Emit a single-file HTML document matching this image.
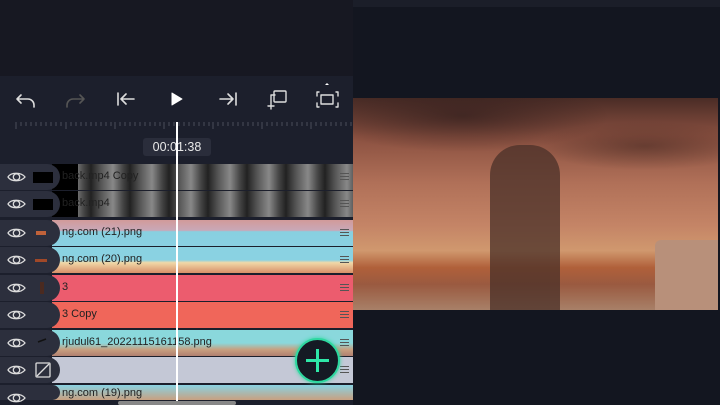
<!DOCTYPE html><html><head><style>
*{margin:0;padding:0;box-sizing:border-box}
body{width:720px;height:405px;overflow:hidden;background:#171822;font-family:"Liberation Sans",sans-serif;position:relative}
.a{position:absolute}
.row{position:absolute;left:0;width:353px;height:26px}
.trk{position:absolute;left:52px;right:0;top:0;bottom:0;overflow:hidden}
.trk span{position:absolute;left:10px;top:6px;font-size:11px;color:#222}
.pill{position:absolute;left:0;top:0;width:60px;height:26px;background:#2c2f3d;border-radius:0 13px 13px 0}
.hb{position:absolute;right:4px;top:9px;width:9px;height:7px;border-top:1px solid #555;border-bottom:1px solid #555}
.hb:after{content:"";position:absolute;left:0;right:0;top:2px;border-top:1px solid #555}
</style></head><body>
<div class="a" style="left:353px;top:0;width:367px;height:405px;background:#131620"></div>
<div class="a" style="left:353px;top:0;width:367px;height:7px;background:#1b1e29"></div>
<div class="a" style="left:353px;top:98px;width:365px;height:212px;background:linear-gradient(180deg,#4a2c26 0%,#8a5040 18%,#b07058 40%,#c48466 60%,#d0986e 72%,#b0603a 80%,#9a5a40 88%,#a88068 100%)"></div>
<div class="a" style="left:353px;top:98px;width:365px;height:120px;background:radial-gradient(ellipse 40% 30% at 30% 15%,rgba(40,25,25,.6),transparent),radial-gradient(ellipse 30% 20% at 80% 40%,rgba(60,35,30,.5),transparent)"></div>
<div class="a" style="left:490px;top:145px;width:70px;height:165px;background:#4a3028;border-radius:30px 30px 0 0;opacity:.75"></div>
<div class="a" style="left:655px;top:240px;width:63px;height:70px;background:#b8907a;border-radius:6px 0 0 0"></div>
<div class="a" style="left:0;top:76px;width:353px;height:329px;background:#1c1f2c"></div>
<svg class="a" style="left:0;top:76px" width="353" height="40" viewBox="0 0 353 40" fill="none" stroke-linecap="round" stroke-linejoin="round">
<path d="M17 23h11a6 6 0 0 1 6 6v2M17 23l4-4M17 23l4 4" stroke="#ddd" stroke-width="1.6"/>
<path d="M84 23H73a6 6 0 0 0-6 6v2M84 23l-4-4M84 23l-4 4" stroke="#555" stroke-width="1.6"/>
<path d="M118 17v12M121 23h13M121 23l5-5M121 23l5 5" stroke="#ddd" stroke-width="1.6"/>
<path d="M172 17v12l10-6z" fill="#fff" stroke="#fff" stroke-width="1"/>
<path d="M236 17v12M233 23h-13M233 23l-5-5M233 23l-5 5" stroke="#ddd" stroke-width="1.6"/>
<rect x="274" y="15" width="12" height="11" rx="1" stroke="#ddd" stroke-width="1.4"/><path d="M271 28v-9h4M268 30h6M271 27v6" stroke="#ddd" stroke-width="1.4"/>
<path d="M319 16h-2v4M336 16h2v4M319 31h-2v-4M336 31h2v-4" stroke="#ddd" stroke-width="1.4"/><rect x="321" y="19" width="12" height="9" stroke="#ddd" stroke-width="1.4"/><path d="M325 9l2-2 2 2z" fill="#fff"/>
</svg>
<svg class="a" style="left:0;top:120px" width="353" height="14">
<g stroke="#4a4d5a" stroke-width="1">
<path d="M16 2v7M21 2v4M26 2v4M31 2v4M36 2v4M41 2v4M46 2v4M51 2v4M56 2v4M61 2v4M66 2v7M71 2v4M76 2v4M81 2v4M86 2v4M91 2v4M96 2v4M101 2v4M106 2v4M111 2v4M115 2v7M120 2v4M125 2v4M130 2v4M135 2v4M140 2v4M145 2v4M150 2v4M155 2v4M160 2v4M164 2v7M169 2v4M174 2v4M179 2v4M184 2v4M189 2v4M194 2v4M199 2v4M204 2v4M209 2v4M213 2v7M218 2v4M223 2v4M228 2v4M233 2v4M238 2v4M243 2v4M248 2v4M253 2v4M258 2v4M262 2v7M267 2v4M272 2v4M277 2v4M282 2v4M287 2v4M292 2v4M297 2v4M302 2v4M307 2v4M311 2v7M316 2v4M321 2v4M326 2v4M331 2v4M336 2v4M341 2v4M346 2v4M351 2v4"/></g></svg>
<div class="a" style="left:143px;top:138px;width:68px;height:18px;background:#2a2d3b;border-radius:3px;color:#e8e8e8;font-size:12.5px;text-align:center;line-height:18px">00:01:38</div>

<div class="row" style="top:164px"><div class="trk" style="background:repeating-linear-gradient(90deg,#222 0,#555 10px,#888 22px,#444 32px,#222 39px)"><div class="a" style="left:0;top:0;width:26px;height:26px;background:#000"></div><span style="color:#222">back.mp4 Copy</span><div class="hb"></div></div><div class="pill"></div></div>
<div class="row" style="top:191px"><div class="trk" style="background:repeating-linear-gradient(90deg,#222 0,#555 10px,#888 22px,#444 32px,#222 39px)"><div class="a" style="left:0;top:0;width:26px;height:26px;background:#000"></div><span style="color:#222">back.mp4</span><div class="hb"></div></div><div class="pill"></div></div>
<div class="row" style="top:220px"><div class="trk" style="background:linear-gradient(180deg,#d29a9a 0,#c8a8b8 40%,#88d0e0 45%,#8ad0e2 100%)"><span>ng.com (21).png</span><div class="hb"></div></div><div class="pill"></div></div>
<div class="row" style="top:247px"><div class="trk" style="background:linear-gradient(180deg,#8ad2e2 0,#8ad2e2 50%,#f0d8a8 60%,#d89068 100%)"><span>ng.com (20).png</span><div class="hb"></div></div><div class="pill"></div></div>
<div class="row" style="top:275px"><div class="trk" style="background:#ec5c6e"><span>3</span><div class="hb"></div></div><div class="pill"></div></div>
<div class="row" style="top:302px"><div class="trk" style="background:#f0665a"><span>3 Copy</span><div class="hb"></div></div><div class="pill"></div></div>
<div class="row" style="top:330px"><div class="trk" style="background:linear-gradient(180deg,#8ad8dc 0,#8ad8dc 50%,#c8a080 75%,#b08070 100%)"><span>rjudul61_20221115161158.png</span><div class="hb"></div></div><div class="pill"></div></div>
<div class="row" style="top:357px"><div class="trk" style="background:#c4c8d6"><div class="hb"></div></div><div class="pill"></div></div>
<div class="row" style="top:385px;height:15px"><div class="trk" style="background:linear-gradient(180deg,#8ad2e2 0,#c8a080 100%)"><span style="top:2px">ng.com (19).png</span></div><div class="pill" style="height:15px"></div></div>

<svg class="a" style="left:0;top:164px" width="60" height="240" fill="none" stroke="#ddd" stroke-width="1.3">
<g id="e"><path d="M8 13c3-5 13-5 17 0c-4 5-14 5-17 0z"/><circle cx="16.5" cy="13" r="3.2"/></g>
<use href="#e" y="27"/><use href="#e" y="56"/><use href="#e" y="83"/><use href="#e" y="111"/><use href="#e" y="138"/><use href="#e" y="166"/><use href="#e" y="193"/><use href="#e" y="221"/>
<rect x="33" y="8" width="20" height="11" fill="#000" stroke="none"/><rect x="33" y="35" width="20" height="11" fill="#000" stroke="none"/>
<rect x="36" y="67" width="10" height="4" fill="#c0623a" stroke="none"/><rect x="35" y="95" width="12" height="3" fill="#a04828" stroke="none"/>
<rect x="40" y="118" width="4" height="12" fill="#4a2a20" stroke="none"/>
<path d="M38 178l8-3" stroke="#111" stroke-width="1.5"/>
<rect x="36" y="199" width="14" height="14" rx="1"/><path d="M37 212l12-12"/>
</svg>
<div class="a" style="left:176px;top:122px;width:2px;height:283px;background:#fff"></div>
<div class="a" style="left:295px;top:338px;width:45px;height:45px;border-radius:50%;background:#151a24;border:2px solid #2ed8a0;box-shadow:0 0 4px #2ed8a0"></div>
<div class="a" style="left:316px;top:349px;width:3px;height:23px;background:#2ee8a8"></div>
<div class="a" style="left:306px;top:359px;width:23px;height:3px;background:#2ee8a8"></div>
<div class="a" style="left:118px;top:401px;width:118px;height:4px;background:#888;border-radius:2px"></div>
</body></html>
